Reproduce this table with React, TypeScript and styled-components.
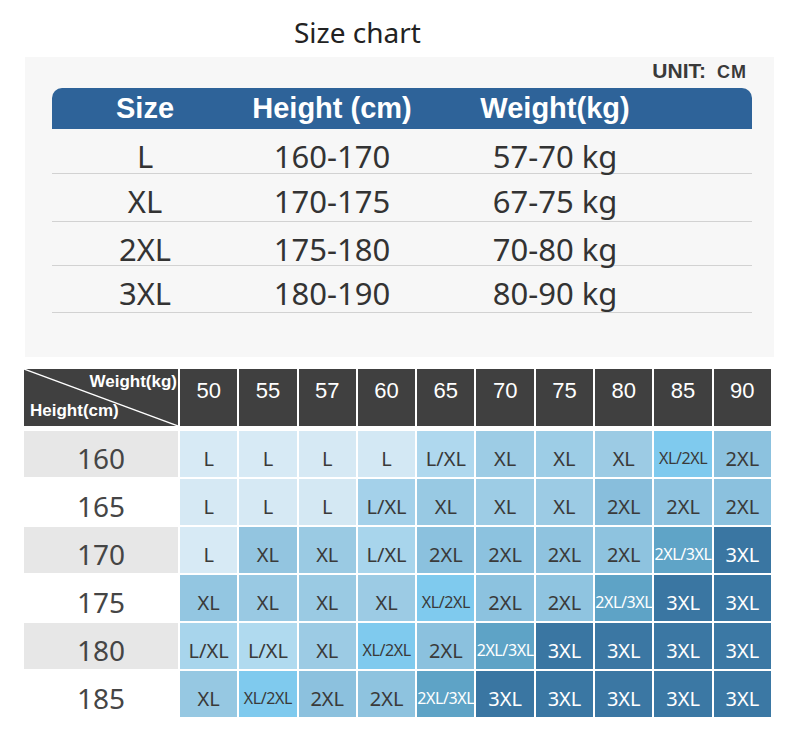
import React from 'react';
import styled, { createGlobalStyle } from 'styled-components';

const Global = createGlobalStyle`
  html, body { margin: 0; padding: 0; background: #ffffff; }
  body { font-family: "Liberation Sans", Arial, sans-serif; }
  * { box-sizing: border-box; }
`;

const Page = styled.div`
  width: 790px;
  height: 730px;
  overflow: hidden;
  background: #ffffff;
`;

const Title = styled.h1`
  margin: 0;
  height: 57px;
  padding: 12px 0 0 294px;
  font-family: "Noto Sans", sans-serif;
  font-weight: 400;
  font-size: 28px;
  line-height: 40px;
  color: #222222;
`;

const Panel = styled.section`
  margin-left: 25px;
  width: 749px;
  height: 300px;
  background: #f7f7f7;
  padding: 0 22px 0 27px;
`;

const UnitRow = styled.div`
  height: 31px;
  padding: 3px 5px 0 0;
  display: flex;
  justify-content: flex-end;
  align-items: baseline;
  color: #3a3a3a;
  font-weight: 700;
  line-height: 1;
`;

const UnitLabel = styled.span`
  font-size: 21px;
`;

const UnitValue = styled.span`
  font-size: 18px;
  letter-spacing: 1px;
  margin-left: 11px;
`;

const SizeGrid = styled.div`
  display: grid;
  grid-template-columns: 186px 188px 258px 1fr;
`;

const SizeHead = styled(SizeGrid)`
  height: 41px;
  background: #2e6399;
  border-radius: 10px 10px 0 0;
  align-items: center;
  color: #ffffff;
  font-weight: 700;
  font-size: 29px;
  line-height: 1;
`;

const SizeRow = styled(SizeGrid)<{ $h: number }>`
  height: ${p => p.$h}px;
  border-bottom: 1px solid #d2d2d2;
  padding-top: 12px;
  font-family: "Noto Sans", sans-serif;
  font-size: 31px;
  line-height: 31px;
  color: #333333;
`;

const HeadCell = styled.div`
  text-align: center;
`;

const DataCell = styled.div`
  text-align: center;
`;

const Chart = styled.section`
  margin: 12px 0 0 24px;
  width: 747px;
`;

const ChartGrid = styled.div`
  display: grid;
  grid-template-columns: 154px repeat(10, 1fr);
  column-gap: 2px;
`;

const ChartHead = styled(ChartGrid)`
  height: 57px;
`;

const ChartBody = styled(ChartGrid)`
  margin-top: 5px;
  grid-auto-rows: 46px;
  row-gap: 2px;
`;

const Corner = styled.div`
  position: relative;
  background: #404040;
  color: #ffffff;
  font-weight: 700;
  font-size: 17px;
  line-height: 20px;
  padding: 3px 1px 0 6px;
  display: flex;
  flex-direction: column;
`;

const Diagonal = styled.svg`
  position: absolute;
  inset: 0;
  width: 100%;
  height: 100%;
`;

const CornerTop = styled.span`
  position: relative;
  align-self: flex-end;
`;

const CornerBottom = styled.span`
  position: relative;
  align-self: flex-start;
  margin-top: 9px;
`;

const WeightCell = styled.div`
  background: #404040;
  color: #ffffff;
  font-size: 22px;
  display: flex;
  align-items: center;
  justify-content: center;
  padding-bottom: 13px;
`;

const HeightLabel = styled.div<{ $shade: boolean }>`
  background: ${p => (p.$shade ? '#e7e7e7' : '#ffffff')};
  color: #454545;
  font-family: "Noto Sans", sans-serif;
  font-size: 28px;
  display: flex;
  align-items: center;
  justify-content: center;
  padding-top: 8px;
`;

const SizeCell = styled.div<{ $bg: string; $light: boolean; $small: boolean }>`
  background: ${p => p.$bg};
  color: ${p => (p.$light ? '#ffffff' : '#3a3a3a')};
  font-family: "Noto Sans", sans-serif;
  font-size: ${p => (p.$small ? '16px' : '20px')};
  letter-spacing: ${p => (p.$small ? '-0.4px' : '0')};
  white-space: nowrap;
  display: flex;
  align-items: center;
  justify-content: center;
  padding-top: 8px;
`;

const summary = [
  { size: 'L', height: '160-170', weight: '57-70 kg', h: 45 },
  { size: 'XL', height: '170-175', weight: '67-75 kg', h: 48 },
  { size: '2XL', height: '175-180', weight: '70-80 kg', h: 44 },
  { size: '3XL', height: '180-190', weight: '80-90 kg', h: 47 },
];

const weights = [50, 55, 57, 60, 65, 70, 75, 80, 85, 90];

type C = [string, string];
const chart: { height: number; cells: C[] }[] = [
  {
    height: 160,
    cells: [
      ['L', '#d7eaf5'], ['L', '#d7eaf5'], ['L', '#d6e9f4'], ['L', '#d3e8f4'], ['L/XL', '#afd8ee'],
      ['XL', '#9dcce5'], ['XL', '#9dcde6'], ['XL', '#9ccbe4'], ['XL/2XL', '#7fcaee'], ['2XL', '#8cc2df'],
    ],
  },
  {
    height: 165,
    cells: [
      ['L', '#d6e9f4'], ['L', '#d6e9f4'], ['L', '#d4e8f3'], ['L/XL', '#a4d1ea'], ['XL', '#98c9e3'],
      ['XL', '#9dcce5'], ['XL', '#9ccbe4'], ['2XL', '#88bedc'], ['2XL', '#8ec3e0'], ['2XL', '#8bc1de'],
    ],
  },
  {
    height: 170,
    cells: [
      ['L', '#d7eaf5'], ['XL', '#93c5e0'], ['XL', '#9acae3'], ['L/XL', '#a8d5ec'], ['2XL', '#8bc1de'],
      ['2XL', '#8cc2df'], ['2XL', '#8fc3df'], ['2XL', '#8ec3df'], ['2XL/3XL', '#5fa4c7'], ['3XL', '#3a76a2'],
    ],
  },
  {
    height: 175,
    cells: [
      ['XL', '#93c6e1'], ['XL', '#99c9e3'], ['XL', '#9acae3'], ['XL', '#9ccbe4'], ['XL/2XL', '#7fcaee'],
      ['2XL', '#8cc2df'], ['2XL', '#8fc4e0'], ['2XL/3XL', '#5ea3c6'], ['3XL', '#3a76a2'], ['3XL', '#3a77a3'],
    ],
  },
  {
    height: 180,
    cells: [
      ['L/XL', '#a8d5ec'], ['L/XL', '#b0daef'], ['XL', '#9ccbe4'], ['XL/2XL', '#7fcaee'], ['2XL', '#8bc1de'],
      ['2XL/3XL', '#5ea3c6'], ['3XL', '#3a76a2'], ['3XL', '#3b77a3'], ['3XL', '#3b77a3'], ['3XL', '#3b78a4'],
    ],
  },
  {
    height: 185,
    cells: [
      ['XL', '#96c8e2'], ['XL/2XL', '#7fcaee'], ['2XL', '#8cc1de'], ['2XL', '#8ec3df'], ['2XL/3XL', '#5ea3c6'],
      ['3XL', '#3a76a2'], ['3XL', '#3a77a3'], ['3XL', '#3b77a3'], ['3XL', '#3b78a4'], ['3XL', '#3b78a4'],
    ],
  },
];

export default function App() {
  return (
    <Page>
      <Global />
      <Title>Size chart</Title>
      <Panel>
        <UnitRow>
          <UnitLabel>UNIT:</UnitLabel>
          <UnitValue>CM</UnitValue>
        </UnitRow>
        <SizeHead>
          <HeadCell>Size</HeadCell>
          <HeadCell>Height (cm)</HeadCell>
          <HeadCell>Weight(kg)</HeadCell>
          <HeadCell />
        </SizeHead>
        {summary.map(r => (
          <SizeRow key={r.size} $h={r.h}>
            <DataCell>{r.size}</DataCell>
            <DataCell>{r.height}</DataCell>
            <DataCell>{r.weight}</DataCell>
            <DataCell />
          </SizeRow>
        ))}
      </Panel>
      <Chart>
        <ChartHead>
          <Corner>
            <Diagonal viewBox="0 0 154 57" preserveAspectRatio="none">
              <line x1="0" y1="0" x2="154" y2="57" stroke="#ffffff" strokeWidth="1.3" />
            </Diagonal>
            <CornerTop>Weight(kg)</CornerTop>
            <CornerBottom>Height(cm)</CornerBottom>
          </Corner>
          {weights.map(w => (
            <WeightCell key={w}>{w}</WeightCell>
          ))}
        </ChartHead>
        <ChartBody>
          {chart.map((row, i) => (
            <React.Fragment key={row.height}>
              <HeightLabel $shade={i % 2 === 0}>{row.height}</HeightLabel>
              {row.cells.map(([t, bg], j) => (
                <SizeCell
                  key={j}
                  $bg={bg}
                  $light={t.includes('3XL')}
                  $small={t.length > 4}
                >
                  {t}
                </SizeCell>
              ))}
            </React.Fragment>
          ))}
        </ChartBody>
      </Chart>
    </Page>
  );
}
